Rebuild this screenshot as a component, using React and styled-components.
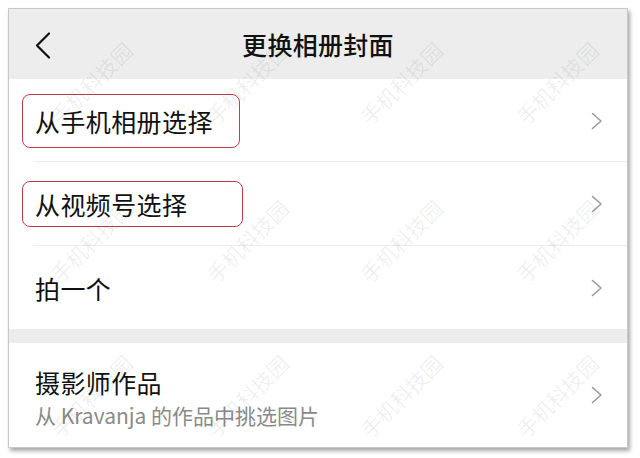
import React from 'react';
import styled, { createGlobalStyle } from 'styled-components';

const GlobalStyle = createGlobalStyle`
  body {
    margin: 0;
    background: #fff;
    font-family: "Noto Sans CJK SC", "Noto Sans", sans-serif;
  }
`;

const Page = styled.div`
  width: 640px;
  height: 458px;
  padding: 8px 0 0 8px;
  box-sizing: border-box;
`;

const Card = styled.div`
  position: relative;
  width: 620px;
  height: 440px;
  background: #fff;
  border: 1px solid #c8c8c8;
  box-sizing: border-box;
  box-shadow: 2px 3px 4px rgba(0, 0, 0, 0.35);
  overflow: hidden;
  display: flex;
  flex-direction: column;
`;

const Header = styled.div`
  position: relative;
  height: 70px;
  flex-shrink: 0;
  background: #ededed;
  display: flex;
  align-items: center;
  justify-content: center;
`;

const Back = styled.button`
  position: absolute;
  left: 26px;
  top: 23px;
  padding: 0;
  border: 0;
  background: none;
  display: flex;
`;

const Title = styled.h1`
  margin: 0;
  font-size: 25px;
  font-weight: 500;
  color: #111;
  letter-spacing: 0.3px;
`;

const Row = styled.div`
  position: relative;
  height: ${p => p.$h}px;
  flex-shrink: 0;
  display: flex;
  align-items: center;
  justify-content: space-between;
  padding: 0 24px 0 26px;
  &::after {
    content: '';
    display: ${p => (p.$divider ? 'block' : 'none')};
    position: absolute;
    left: 25px;
    right: 0;
    bottom: 0;
    height: 1px;
    background: #ececec;
  }
`;

const Gap = styled.div`
  height: 14px;
  flex-shrink: 0;
  background: #ededed;
`;

const Label = styled.span`
  position: relative;
  font-size: 25px;
  line-height: 30px;
  color: #111;
  letter-spacing: 0.4px;
`;

const Outline = styled.span`
  position: absolute;
  left: -13px;
  top: 50%;
  width: ${p => p.$w}px;
  height: ${p => p.$h}px;
  transform: translateY(-50%);
  border: 1.5px solid #c23b4a;
  border-radius: 8px;
  box-sizing: border-box;
`;

const Stack = styled.div`
  display: flex;
  flex-direction: column;
  gap: 5px;
  margin-top: 5px;
`;

const Sub = styled.span`
  font-size: 21px;
  line-height: 26px;
  color: #8a8a8a;
`;

const Mark = styled.span`
  position: absolute;
  transform: translate(-50%, -50%) rotate(-45deg);
  font-size: 21px;
  color: rgba(0, 0, 0, 0.075);
  white-space: nowrap;
  pointer-events: none;
`;

const Chevron = () => (
  <svg width="12" height="18" viewBox="0 0 12 18" fill="none">
    <path d="M1.5 1.5 L10 9 L1.5 16.5" stroke="#9a9a9a" strokeWidth="1.6" strokeLinecap="round" strokeLinejoin="round" />
  </svg>
);

const BackIcon = () => (
  <svg width="16" height="27" viewBox="0 0 16 27" fill="none">
    <path d="M14 1.5 L2 13.5 L14 25.5" stroke="#111" strokeWidth="2.2" strokeLinecap="round" strokeLinejoin="round" />
  </svg>
);

const marks = [];
[74, 232, 387].forEach(y => [82, 238, 392, 548].forEach(x => marks.push({ x, y })));

export default function App() {
  return (
    <Page>
      <GlobalStyle />
      <Card>
        <Header>
          <Back><BackIcon /></Back>
          <Title>更换相册封面</Title>
        </Header>
        <Row $h={83} $divider>
          <Label>从手机相册选择<Outline $w={218} $h={54} /></Label>
          <Chevron />
        </Row>
        <Row $h={84} $divider>
          <Label>从视频号选择<Outline $w={221} $h={46} /></Label>
          <Chevron />
        </Row>
        <Row $h={83}>
          <Label>拍一个</Label>
          <Chevron />
        </Row>
        <Gap />
        <Row $h={104}>
          <Stack>
            <Label>摄影师作品</Label>
            <Sub>从 Kravanja 的作品中挑选图片</Sub>
          </Stack>
          <Chevron />
        </Row>
        {marks.map((m, i) => (
          <Mark key={i} style={{ left: m.x, top: m.y }}>手机科技园</Mark>
        ))}
      </Card>
    </Page>
  );
}
